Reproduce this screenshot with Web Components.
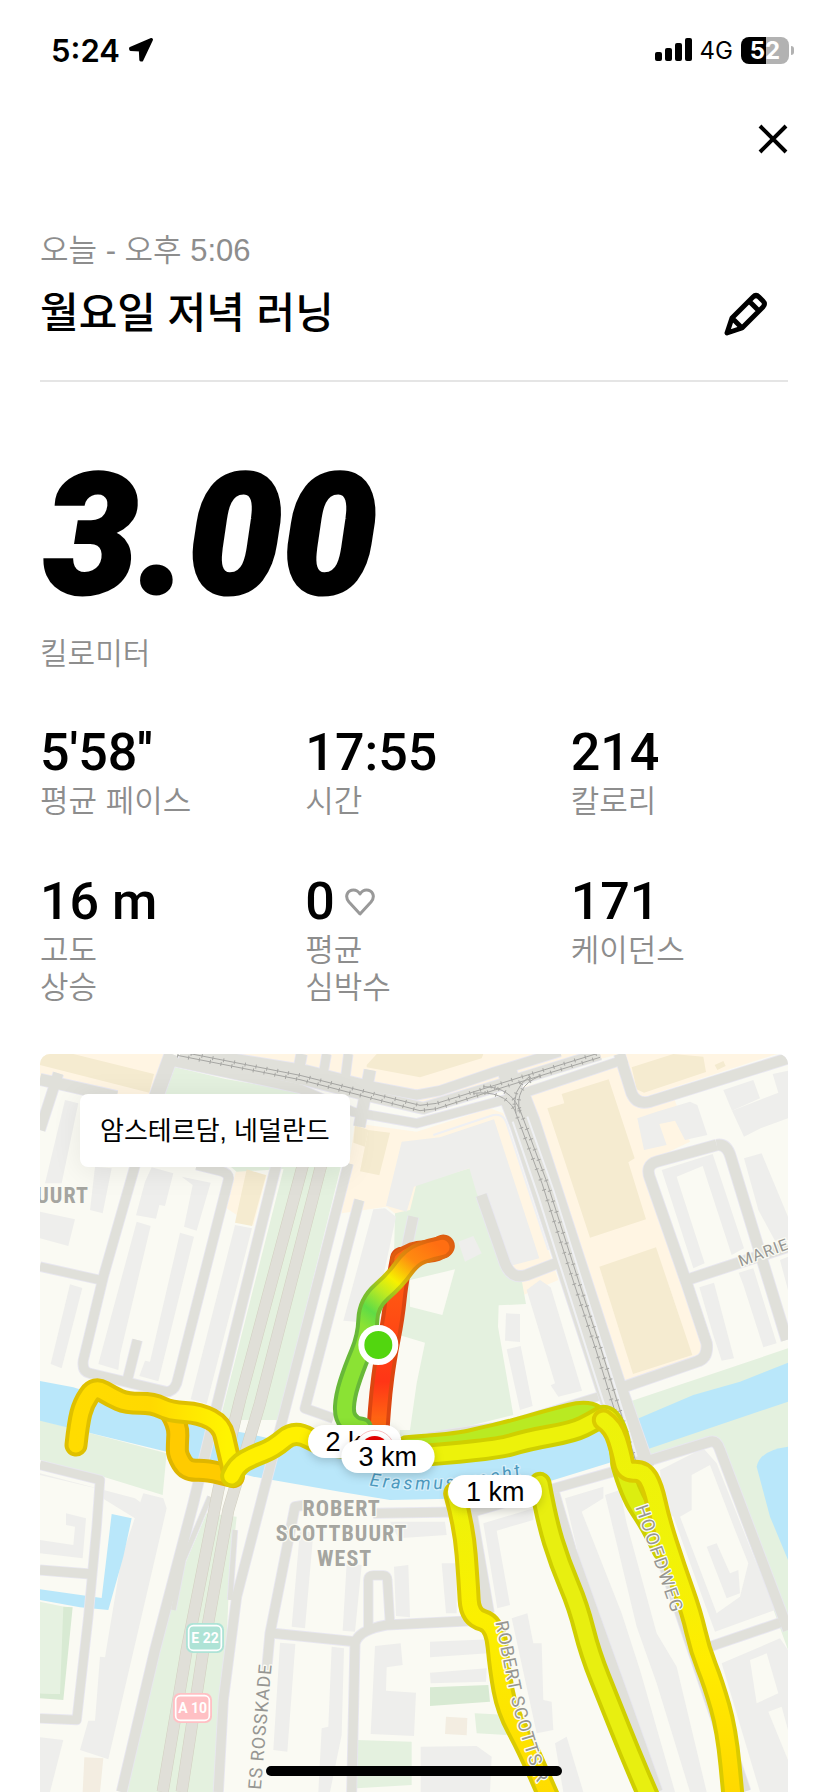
<!DOCTYPE html>
<html lang="ko">
<head>
<meta charset="utf-8">
<meta name="viewport" content="width=device-width, initial-scale=1">
<title>월요일 저녁 러닝</title>
<style>
    html, body {
        margin: 0;
        height: 100%;
        background: #fff;
        color: #000;
        font-family: "Liberation Sans", "Noto Sans CJK KR", sans-serif;
    }
</style>
</head>
<body>
<run-screen>
    <status-bar slot="status" time="5:24" network="4G" battery="52"></status-bar>
    <run-header slot="header" date="오늘 - 오후 5:06">월요일 저녁 러닝</run-header>
    <run-distance slot="distance" value="3.00">킬로미터</run-distance>
    <stat-grid slot="stats">
        <run-stat value="5'58''">평균 페이스</run-stat>
        <run-stat value="17:55">시간</run-stat>
        <run-stat value="214">칼로리</run-stat>
        <run-stat value="16 m">고도<br>상승</run-stat>
        <run-stat value="0" heart>평균<br>심박수</run-stat>
        <run-stat value="171">케이던스</run-stat>
    </stat-grid>
    <route-map slot="map">암스테르담, 네덜란드</route-map>
</run-screen>

<script>
class RunScreen extends HTMLElement {
    constructor() {
        super();
        this.attachShadow({ mode: 'open' });
    }
    connectedCallback() {
        this.shadowRoot.innerHTML = `
        <style>
            :host {
                display: flex;
                flex-direction: column;
                min-height: 100vh;
            }
            nav {
                display: flex;
                justify-content: flex-end;
                padding: 20px 36px;
            }
            button {
                display: flex;
                padding: 0;
                border: 0;
                background: none;
                color: inherit;
            }
            main {
                flex: 1;
                display: flex;
                flex-direction: column;
                padding: 0 40px;
            }
            ::slotted([slot=map]) {
                flex: 1;
            }
            .home {
                position: fixed;
                left: 50%;
                bottom: 16px;
                width: 296px;
                height: 10px;
                margin-left: -148px;
                border-radius: 5px;
                background: #000;
            }
        </style>
        <slot name="status"></slot>
        <nav>
            <button type="button" aria-label="닫기">
                <svg width="38" height="38" viewBox="0 0 38 38" fill="none" stroke="currentColor" stroke-width="4">
                    <path d="M6 6 32 32M32 6 6 32"/>
                </svg>
            </button>
        </nav>
        <main>
            <slot name="header"></slot>
            <slot name="distance"></slot>
            <slot name="stats"></slot>
            <slot name="map"></slot>
        </main>
        <div class="home"></div>
        `;
    }
}

class StatusBar extends HTMLElement {
    constructor() {
        super();
        this.attachShadow({ mode: 'open' });
    }
    connectedCallback() {
        const level = this.getAttribute('battery');
        this.shadowRoot.innerHTML = `
        <style>
            :host {
                display: flex;
                justify-content: space-between;
                align-items: center;
                height: 100px;
                padding: 0 34px 0 51px;
                font-family: Inter, sans-serif;
            }
            .side {
                display: flex;
                align-items: center;
                gap: 8px;
            }
            .time {
                font-size: 31px;
                font-weight: 600;
            }
            .network {
                font-size: 24px;
            }
            .battery {
                display: flex;
                align-items: center;
                gap: 2px;
            }
            .level {
                width: 48px;
                border-radius: 8px;
                background: linear-gradient(90deg, #000 ${level}%, #b2b2b2 ${level}%);
                color: #fff;
                font-size: 24px;
                font-weight: 700;
                line-height: 27px;
                text-align: center;
            }
            .tip {
                width: 3px;
                height: 9px;
                border-radius: 0 4px 4px 0;
                background: #b2b2b2;
            }
        </style>
        <div class="side">
            <span class="time">${this.getAttribute('time')}</span>
            <svg width="26" height="26" viewBox="0 0 26 26" stroke="#000" stroke-width="3" stroke-linejoin="round">
                <path d="M23.500 2.500 2.500 11.500 2.800 12.500 12.300 13 12.800 23 13.800 23Z"/>
            </svg>
        </div>
        <div class="side">
            <svg width="37" height="24" viewBox="0 0 37 24">
                <rect x="0" y="14" width="7" height="9" rx="2"/>
                <rect x="10" y="10" width="7" height="13" rx="2"/>
                <rect x="20" y="5" width="7" height="18" rx="2"/>
                <rect x="30" y="0" width="7" height="23" rx="2"/>
            </svg>
            <span class="network">${this.getAttribute('network')}</span>
            <span class="battery"><span class="level">${level}</span><span class="tip"></span></span>
        </div>
        `;
    }
}

class RunHeader extends HTMLElement {
    constructor() {
        super();
        this.attachShadow({ mode: 'open' });
    }
    connectedCallback() {
        this.shadowRoot.innerHTML = `
        <style>
            :host {
                display: block;
                padding: 53px 0 38px;
                border-bottom: 2px solid #e5e5e5;
            }
            .date {
                margin: 0;
                color: #8d8d8d;
                font-size: 31px;
                font-weight: 350;
                line-height: 40px;
            }
            .row {
                display: flex;
                justify-content: space-between;
                align-items: center;
                margin-top: 15px;
                padding-right: 20px;
            }
            h1 {
                margin: 0;
                font-size: 42px;
                font-weight: 500;
                line-height: 56px;
            }
            button {
                display: flex;
                padding: 0;
                border: 0;
                background: none;
                color: inherit;
            }
        </style>
        <p class="date">${this.getAttribute('date')}</p>
        <div class="row">
            <h1><slot></slot></h1>
            <button type="button" aria-label="이름 편집">
                <svg width="46" height="46" viewBox="0 0 46 46" fill="none" stroke="currentColor" stroke-width="5" stroke-linejoin="round">
                    <path d="M5 42 10 27 31 6Q34 3 37 6L41 10Q44 13 41 16L20 37ZM27 10 37 20M10 27 20 37"/>
                </svg>
            </button>
        </div>
        `;
    }
}

class RunDistance extends HTMLElement {
    constructor() {
        super();
        this.attachShadow({ mode: 'open' });
    }
    connectedCallback() {
        this.shadowRoot.innerHTML = `
        <style>
            :host {
                display: block;
                padding: 64px 0 49px;
            }
            .value {
                padding-left: 4px;
                font-family: Roboto, sans-serif;
                font-size: 168px;
                font-style: italic;
                font-weight: 900;
                line-height: 180px;
                -webkit-text-stroke: 3px #000;
            }
            .unit {
                margin-top: 8px;
                color: #8d8d8d;
                font-size: 30px;
                font-weight: 350;
                line-height: 40px;
            }
        </style>
        <div class="value">${this.getAttribute('value')}</div>
        <div class="unit"><slot></slot></div>
        `;
    }
}

class StatGrid extends HTMLElement {
    constructor() {
        super();
        this.attachShadow({ mode: 'open' });
    }
    connectedCallback() {
        this.shadowRoot.innerHTML = `
        <style>
            :host {
                display: grid;
                grid-template-columns: repeat(3, 1fr);
                gap: 52px 48px;
                padding-bottom: 48px;
            }
        </style>
        <slot></slot>
        `;
    }
}

class RunStat extends HTMLElement {
    constructor() {
        super();
        this.attachShadow({ mode: 'open' });
    }
    connectedCallback() {
        const heart = this.hasAttribute('heart') ? `
            <svg width="30" height="28" viewBox="0 0 30 28" fill="none" stroke="#999" stroke-width="3" stroke-linejoin="round">
                <path d="M15 26 4 14C-1 8 3 2 8.500 2Q12.500 2 15 6Q17.500 2 21.500 2C27 2 31 8 26 14Z"/>
            </svg>` : '';
        this.shadowRoot.innerHTML = `
        <style>
            :host {
                display: block;
            }
            .value {
                display: flex;
                align-items: center;
                gap: 10px;
                font-family: Roboto, sans-serif;
                font-size: 52px;
                font-weight: 500;
                line-height: 60px;
            }
            .label {
                color: #8d8d8d;
                font-size: 31px;
                font-weight: 350;
                line-height: 37px;
            }
        </style>
        <div class="value"><span>${this.getAttribute('value')}</span>${heart}</div>
        <div class="label"><slot></slot></div>
        `;
    }
}

// Map units are a third of a pixel at the phone's width.
const PARKS = [
    'M400 50 560 88 900 145 850 350 590 365 345 160Z',
    'M735 340 905 340 715 1110 540 1110Z',
    'M500 1390 590 1400 565 1650 540 2226 262 2226 350 1790 440 1530Z',
    'M1110 480 1130 400 1290 355 1320 440 1400 680 1445 690 1458 762 1376 766 1374 830 1420 1095 1200 1150 1080 1160 1060 700 1065 490Z',
    'M0 1110 380 1210 368 1335 190 1280 0 1230Z',
    'M1754 1060 2244 895 2244 1800 2020 1180 1800 1230Z',
    'M950 2070 1115 2075 1115 2205 950 2215Z',
    'M1304 1990 1410 1995 1400 2055 1310 2050Z'
];
const FIELDS = [
    'M70 1670 98 1672 70 1950 0 1945 0 1930 60 1932Z',
    'M1170 1912 1345 1905 1350 1955 1170 1968Z'
];
const LAWNS = ['M0 1655 80 1672 62 1932 0 1930Z'];
const YARDS = [
    'M1110 690 1245 658 1207 795 1110 770Z',
    'M1060 850 1155 878 1130 1000 1110 1140 1040 1140Z'
];
const SAND = [
    'M0 12 400 12 345 160 0 80Z',
    'M560 12 1740 12 1390 100 1150 165Z',
    'M945 220 1130 245 1350 175 1390 190 1555 690 1450 735 1430 680 1380 500 1130 410 1110 485 1070 495 1040 470 905 490Z',
    'M1450 110 1734 40 1774 160 1904 150 1950 275 1814 340 1844 460 1944 720 2004 900 1754 1005Z',
    'M1750 12 2210 12 1785 150Z',
    'M590 355 680 375 640 528 560 475Z'
];
const SHOPS = [
    'M0 12 100 12 342 72 328 128 0 45Z',
    'M985 240 1050 248 1018 376 960 364Z',
    'M945 225 985 240 975 290 940 278Z',
    'M980 45 1010 12 1330 12 1325 25 1140 82 980 52Z',
    'M620 358 678 376 636 528 585 518Z',
    'M1522 175 1573 160 1565 132 1706 88 1784 325 1765 337 1818 508 1650 563Z',
    'M1678 650 1848 592 1957 915 1779 972Z',
    'M1775 52 1900 12 1990 20 1998 66 1812 128 1790 118Z',
    'M2024 45 2050 33 2057 48 2032 60Z'
];
const SHEDS = [
    'M133 2122 190 2125 180 2226 128 2226Z',
    'M1218 2000 1282 2004 1280 2056 1215 2052Z'
];
const BUILDINGS = [
    'M75 150 115 160 65 400 15 400Z', 'M165 350 215 355 188 490 150 480Z',
    'M0 485 105 508 85 588 0 565Z', 'M335 352 400 370 375 468 358 465 348 506 288 496 315 395Z',
    'M425 380 512 398 470 542 432 530 458 405Z', 'M290 515 332 528 240 915 235 960 175 942Z',
    'M420 548 462 560 355 994 298 978 315 932 330 935Z', 'M90 703 127 714 65 955 32 942Z',
    'M585 525 636 535 500 1062 452 1048Z', 'M1000 478 1035 475 1068 500 1000 820 910 812Z',
    'M1085 275 1200 262 1362 208 1498 625 1410 648 1310 430 1288 355 1122 410 1100 485 1038 467Z',
    'M1460 720 1500 690 1532 712 1626 1022 1555 1040 1532 1006 1545 1000Z',
    'M1398 790 1440 792 1440 876 1395 872Z', 'M1400 898 1442 888 1478 1068 1440 1080Z',
    'M1255 575 1300 558 1325 610 1275 635Z',
    'M1792 205 1850 185 1950 155 1972 165 2002 255 1935 270 1905 212 1858 222 1880 285 1812 300Z',
    'M2050 120 2140 90 2160 145 2076 182Z', 'M2076 182 2215 128 2198 72 2244 62 2244 205 2162 235 2112 260Z',
    'M1865 360 2018 312 2112 595 2075 615 1988 348 1910 380 1994 640 1960 655Z',
    'M2112 325 2165 310 2244 500 2244 570 2205 572 2155 480Z',
    'M1978 712 2022 698 2082 925 2045 932 2018 850Z',
    'M2096 668 2140 655 2210 880 2170 892 2110 705Z', 'M2220 630 2244 620 2244 720Z',
    'M0 1275 190 1320 180 1340 285 1405 305 1360 285 1345 0 1270Z',
    'M310 1330 370 1345 380 1375 205 2128 120 2100 145 2012 165 2012 180 1820 195 1822 245 1520Z',
    'M78 1390 138 1405 128 1525 0 1510 0 1470 100 1485 105 1430 78 1425Z',
    'M0 2062 70 2070 30 2226 0 2226Z',
    'M780 1440 820 1450 795 1735 755 1730Z', 'M920 1540 965 1545 945 1745 908 1742Z',
    'M1062 1550 1105 1545 1110 1702 1068 1698Z', 'M1050 1415 1215 1415 1220 1455 1075 1465Z',
    'M720 1778 766 1782 742 2105 700 2100Z', 'M875 1790 912 1795 905 2055 870 2226 835 2226 845 2035 865 2030Z',
    'M1005 1788 1082 1780 1088 1845 1040 1852 1038 1922 1128 1928 1122 2058 992 2052Z',
    'M1205 1540 1250 1540 1250 1690 1218 1690Z', 'M1170 1775 1350 1768 1345 1810 1170 1822Z',
    'M1170 1868 1340 1855 1338 1895 1172 1900Z', 'M1142 2090 1310 2088 1355 2120 1350 2226 1142 2226Z',
    'M1330 1420 1480 1375 1480 1410 1370 1442 1410 1665 1372 1675Z',
    'M1415 1705 1462 1690 1480 1780 1505 1780 1510 1950 1535 1955 1540 2040 1490 2050Z',
    'M1545 2080 1580 2060 1630 2226 1570 2226Z',
    'M1575 1345 1690 1310 1690 1345 1625 1385 1745 1690 1800 1860 1905 2226 1850 2226 1740 1940 1640 1620Z',
    'M1695 1335 1740 1320 1760 1420 1850 1750 1910 1850 2000 2226 1950 2226 1850 1900 1790 1730Z',
    'M1860 1260 1990 1195 2030 1240 2205 1680 2025 1745 1990 1650 1900 1400 1870 1380Z',
    'M2045 1840 2220 1765 2244 1800 2244 2226 2160 2226Z'
];
const COURTS = [
    'M1955 1275 2010 1245 2085 1440 2125 1540 2100 1640 2030 1690 1920 1400 1955 1380Z',
    'M2130 1830 2180 1810 2215 1930 2150 1960Z', 'M2185 1985 2225 1970 2244 2040 2244 2130Z'
];
const WINGS = ['M2000 1490 2030 1480 2070 1570 2095 1560 2100 1630 2060 1645Z'];
const WATER = [
    'M0 993 100 1012 420 1115 620 1150 800 1190 1200 1205 1500 1140 1690 1110 1784 1110 1960 1035 2100 995 2244 938 2244 1055 1809 1202 1704 1240 1524 1295 1300 1345 1050 1350 900 1325 640 1280 380 1205 0 1112Z',
    'M215 1392 275 1405 250 1520 205 1680 120 1672 0 1650 0 1618 185 1644Z',
    'M2150 1250Q2160 1200 2244 1190L2244 1530 2190 1400Z'
];
// [width, path]
const ROADS = [
    [34, 'M0 88 230 140'], [30, 'M55 70 0 240'], [42, 'M395 12 345 150'],
    [28, 'M290 330 190 680 130 930Q125 965 150 970L380 1025Q400 1025 410 1000L565 390Q570 370 540 362L470 345'],
    [26, 'M0 650 180 690'], [28, 'M292 870 262 990'],
    [30, 'M710 340 530 1070 460 1360 345 1800 245 2226'],
    [28, 'M925 340 735 1080 680 1290 590 1640 550 1950 535 2226'],
    [14, 'M510 1340 430 1530 400 1680'], [14, 'M585 1440 570 1650'],
    [28, 'M958 450 795 1075 880 1105'], [30, 'M1120 500 1090 640'],
    [28, 'M500 12 800 60 1000 110 1130 135 1200 122 1364 66 1560 5'],
    [26, 'M400 35 780 116 940 186 1130 220 1390 150 1760 26'],
    [34, 'M420 12 780 85 1000 140 1150 175 1364 110 1680 12'],
    [32, 'M785 12 768 100'], [34, 'M990 60 958 230'], [26, 'M860 12 850 70'], [26, 'M925 12 915 90'],
    [56, 'M1400 60 1430 150'], [90, 'M1424 140 1455 220 1709 1000 1800 1260'],
    [32, 'M1324 435 1395 640Q1415 690 1460 675L1550 640'],
    [32, 'M1738 12 1775 130Q1790 165 1830 155L2244 25'],
    [32, 'M2030 285 1850 335Q1815 345 1830 385L1940 700 2000 880Q2005 925 1970 935L1754 1010'],
    [32, 'M2030 285Q2060 280 2072 320L2240 870'], [32, 'M1940 690 2244 590'],
    [24, 'M1674 1040 1400 1125 1164 1160'],
    [26, 'M0 1245 180 1290 170 1430 145 1700 110 2010 0 2005'], [28, 'M0 1560 150 1572'],
    [28, 'M795 1365 765 1370 690 1750 680 1860'],
    [28, 'M1000 1390 1300 1385 1560 1310 1720 1265'],
    [30, 'M1800 1240 2010 1175Q2030 1170 2040 1200L2244 1740'],
    [28, 'M700 1750 945 1775'], [28, 'M935 2226 945 1780Q955 1740 1040 1725L1340 1710'],
    [26, 'M985 1740 985 1590Q985 1576 1000 1576L1030 1576Q1042 1576 1042 1590L1050 1720'],
    [44, 'M1790 1280 2110 2226'], [36, 'M1540 1330 1590 1500 1850 2226'], [34, 'M1290 1370 1345 1690'],
    [28, 'M2010 1790 2220 1718']
];
const HIGHWAY = ['M790 340 600 1050 535 1320 440 1800 368 2226', 'M845 340 660 1060 565 1380 490 1800 425 2226'];
const KERBS = ['M1418 215 1495 440 1672 1000 1750 1240', 'M1462 200 1540 420 1716 980 1790 1220', 'M1180 255 1360 195Q1390 190 1400 220L1525 600'];
const RAILS = [
    'M420 5 780 76 1000 131 1140 166 1190 160 1364 106 1440 82 1680 8',
    'M412 16 780 89 1000 146 1140 182 1190 176 1364 120 1440 96 1680 22',
    'M1300 130Q1390 120 1424 180L1506 400 1602 700 1668 900 1770 1230',
    'M1330 110Q1410 110 1440 180L1522 400 1618 700 1684 900 1786 1230',
    'M1500 78Q1420 110 1440 190', 'M1470 78Q1410 120 1428 190'
];
// [edge, fill, points]; edge and fill are colours or gradients
const TRACKS = [
    ['#dfb600', '#ffcb00', '390 1085 415 1125 412 1185 412 1215 440 1262 500 1260 580 1280'],
    ['#dfc000', 'url(#west)', '108 1185 115 1120 130 1060 165 1010 215 1040 260 1060 340 1060 390 1085 480 1090 545 1125 560 1190 580 1275'],
    ['#dbcd00', '#fff000', '575 1278 590 1245 640 1218 700 1195 765 1140 850 1190 1000 1195'],
    ['#cfcf00', '#b9ea22', '1100 1190 1250 1180 1330 1160 1400 1145 1540 1105 1640 1080 1690 1110'],
    ['#cfcf00', '#edf20a', '1100 1220 1364 1200 1460 1170 1600 1145 1660 1115 1700 1090 1735 1150 1745 1230'],
    ['#cfcf00', '#dcee10', '1745 1240 1770 1330 1830 1420 1870 1500'],
    ['#dbcb00', 'url(#south)', '1690 1110 1720 1130 1745 1210 1755 1265 1810 1262 1838 1310 1860 1410 1905 1550 1955 1690 1980 1800 2020 1900 2060 2040 2080 2250'],
    ['#cfcf00', '#e8ef10', '1500 1300 1520 1410 1560 1540 1615 1670 1650 1810 1710 1960 1770 2110 1830 2250'],
    ['#dbcb00', 'url(#scott)', '1244 1330 1272 1430 1285 1600 1290 1700 1365 1722 1378 1860 1400 1980 1460 2090 1530 2250'],
    ['#dc4611', 'url(#back)', '1085 625 1070 700 1060 800 1035 930 1022 1030 1015 1125'],
    ['#dd5d10', '#ff6a12', '1085 630 1120 605 1180 605 1210 588'],
    ['url(#outEdge)', 'url(#out)', '1206 592 1175 598 1115 620 1065 690 985 760 982 860 940 960 915 1040 912 1100 940 1130 965 1135']
];
const fill = (list, name) => list.map(d => `<path class="${name}" d="${d}"/>`).join('');

// runs quadratic curves through the midpoints
const smooth = points => {
    const p = points.split(' ').map(Number);
    let d = `M${p[0]} ${p[1]}`;
    for (let i = 2; i < p.length - 2; i += 2) {
        d += `Q${p[i]} ${p[i + 1]} ${(p[i] + p[i + 2]) / 2} ${(p[i + 1] + p[i + 3]) / 2}`;
    }
    return d + `L${p[p.length - 2]} ${p[p.length - 1]}`;
};

class RouteMap extends HTMLElement {
    constructor() {
        super();
        this.attachShadow({ mode: 'open' });
    }
    connectedCallback() {
        const line = (list, extra, name) => list.map(([w, d]) => `<path class="${name}" stroke-width="${w + extra}" d="${d}"/>`).join('');
        const tracks = TRACKS.map(([edge, inner, points]) => `
            <path stroke="${edge}" stroke-width="69" d="${smooth(points)}"/>
            <path stroke="${inner}" stroke-width="45" d="${smooth(points)}"/>`).join('');
        this.shadowRoot.innerHTML = `
        <style>
            :host {
                position: relative;
                display: flex;
                min-height: 400px;
                border-radius: 10px 10px 0 0;
                overflow: hidden;
                background: #fafaf3;
            }
            .canvas {
                position: absolute;
                width: 100%;
                height: 100%;
            }
            .place {
                position: relative;
                align-self: flex-start;
                margin: 40px;
                padding: 2px 20px 0;
                border-radius: 8px;
                background: #fff;
                box-shadow: 0 4px 30px rgba(0,0,0,.08);
                font-size: 26px;
                line-height: 71px;
            }
            .park { fill: #e4f1df; }
            .lawn { fill: #e6f2e1; }
            .field { fill: #d8ead3; }
            .yard { fill: #fafaf3; }
            .sand { fill: #fff5e3; }
            .shop { fill: #f5ebd0; }
            .shed { fill: #f3ede1; }
            .building { fill: #eeeeec; }
            .water { fill: #b9e7fa; }
            .casing, .road, .rail, .tie, .edge, .lane, .kerb, .track {
                fill: none;
                stroke-linejoin: round;
            }
            .casing { stroke: #e8e7f0; }
            .road { stroke: #e0e0da; }
            .edge { stroke: #d2cfc0; stroke-width: 36; }
            .lane { stroke: #e0dfd8; stroke-width: 33; }
            .kerb { stroke: #eff0f3; stroke-width: 6; }
            .rail { stroke: #a6a6a3; stroke-width: 3; }
            .tie { stroke: #a6a6a3; stroke-width: 12; stroke-dasharray: 3 30; }
            .track { stroke-linecap: round; }
            text {
                paint-order: stroke;
                stroke: #fafaf3;
                stroke-width: 8px;
                stroke-linejoin: round;
                fill: #a5a5a0;
                font-family: Roboto, sans-serif;
            }
            .area { font-family: "Roboto Condensed", Roboto, sans-serif; font-size: 66px; font-weight: 700; text-anchor: middle; letter-spacing: 3px; }
            .start { text-anchor: end; }
            .street { font-size: 54px; letter-spacing: 3px; fill: #969692; }
            .side { font-size: 48px; }
            .wide { letter-spacing: 6px; }
            .canal { font-size: 54px; font-style: italic; letter-spacing: 9px; fill: #4c9abf; stroke: #d5effa; }
            .sign { font-size: 42px; font-weight: 700; text-anchor: middle; fill: #fff; stroke: none; }
            .km { font-family: "Liberation Sans", sans-serif; font-size: 81px; text-anchor: middle; fill: #000; stroke: none; }
            .pill { fill: #fff; filter: drop-shadow(0 8px 14px rgba(0,0,0,.18)); }
        </style>
        <svg class="canvas" viewBox="0 12 2244 2214" preserveAspectRatio="xMidYMin slice" role="img" aria-label="러닝 경로">
            <defs>
                <linearGradient id="west" gradientUnits="userSpaceOnUse" x1="100" y1="0" x2="560" y2="0">
                    <stop offset="0" stop-color="#ffdc00"/><stop offset=".5" stop-color="#ffd900"/><stop offset="1" stop-color="#fff400"/>
                </linearGradient>
                <linearGradient id="south" gradientUnits="userSpaceOnUse" x1="0" y1="1100" x2="0" y2="2226">
                    <stop offset="0" stop-color="#edf20a"/><stop offset=".35" stop-color="#f0f308"/><stop offset=".65" stop-color="#ffec00"/><stop offset="1" stop-color="#ffd900"/>
                </linearGradient>
                <linearGradient id="scott" gradientUnits="userSpaceOnUse" x1="0" y1="1345" x2="0" y2="2226">
                    <stop offset="0" stop-color="#edf20a"/><stop offset=".4" stop-color="#fbf000"/><stop offset="1" stop-color="#ffdc00"/>
                </linearGradient>
                <linearGradient id="back" gradientUnits="userSpaceOnUse" x1="0" y1="620" x2="0" y2="1120">
                    <stop offset="0" stop-color="#ff6410"/><stop offset=".75" stop-color="#ff3516"/><stop offset="1" stop-color="#ff6a12"/>
                </linearGradient>
                <linearGradient id="out" gradientUnits="userSpaceOnUse" x1="1200" y1="590" x2="1000" y2="850">
                    <stop offset="0" stop-color="#ff6e12"/><stop offset=".25" stop-color="#ff8a10"/><stop offset=".5" stop-color="#f7f000"/><stop offset=".65" stop-color="#bdea22"/><stop offset=".85" stop-color="#5fdc46"/><stop offset="1" stop-color="#8be234"/>
                </linearGradient>
                <linearGradient id="outEdge" gradientUnits="userSpaceOnUse" x1="1200" y1="590" x2="1000" y2="850">
                    <stop offset="0" stop-color="#e0600f"/><stop offset=".3" stop-color="#dc8c0e"/><stop offset=".5" stop-color="#cfc80a"/><stop offset=".7" stop-color="#7fc02c"/><stop offset="1" stop-color="#67b838"/>
                </linearGradient>
                <path id="canalLine" d="M988 1306Q1230 1345 1500 1262"/>
                <path id="scottLine" d="M1366 1716 1408 1925Q1440 2060 1480 2170L1520 2270"/>
            </defs>
            ${fill(SAND, 'sand')}
            ${fill(PARKS, 'park')}
            ${fill(LAWNS, 'lawn')}
            ${fill(FIELDS, 'field')}
            ${fill(YARDS, 'yard')}
            ${fill(SHOPS, 'shop')}
            ${fill(SHEDS, 'shed')}
            ${fill(BUILDINGS, 'building')}
            ${fill(COURTS, 'yard')}
            ${fill(WINGS, 'building')}
            ${fill(WATER, 'water')}
            ${line(ROADS, 5, 'casing')}
            ${line(ROADS, 0, 'road')}
            ${fill(HIGHWAY, 'edge')}
            ${fill(HIGHWAY, 'lane')}
            ${fill(KERBS, 'kerb')}
            ${fill(RAILS, 'rail')}
            ${fill(RAILS, 'tie')}
            <text class="area start" x="147" y="458">UURT</text>
            <text class="area">
                <tspan x="914" y="1398">ROBERT</tspan>
                <tspan x="914" y="1472">SCOTTBUURT</tspan>
                <tspan x="914" y="1547">WEST</tspan>
            </text>
            <text class="canal"><textPath href="#canalLine">Erasmusgracht</textPath></text>
            <g class="track">${tracks}</g>
            <text class="street side" transform="translate(2102 650) rotate(-20)">MARIE</text>
            <text class="street wide" transform="translate(1786 1372) rotate(71)">HOOFDWEG</text>
            <text class="street"><textPath href="#scottLine">ROBERT SCOTTS R</textPath></text>
            <text class="street" transform="translate(662 2220) rotate(-85)">ES ROSSKADE</text>
            <rect x="438" y="1719" width="114" height="90" rx="20" fill="#aee3d6"/>
            <rect x="446" y="1727" width="98" height="74" rx="14" fill="#aee3d6" stroke="#fff" stroke-width="5"/>
            <text class="sign" x="495" y="1779">E 22</text>
            <rect x="399" y="1929" width="117" height="90" rx="20" fill="#ffc0c4"/>
            <rect x="407" y="1937" width="101" height="74" rx="14" fill="#ffc0c4" stroke="#fff" stroke-width="5"/>
            <text class="sign" x="458" y="1989">A 10</text>
            <circle cx="1015" cy="885" r="51" fill="#52d60f" stroke="#fff" stroke-width="18"/>
            <rect class="pill" x="804" y="1125" width="280" height="99" rx="50"/>
            <text class="km" x="944" y="1204">2 km</text>
            <circle cx="1004" cy="1200" r="59" fill="#fff" stroke="#f3a0a0" stroke-width="2"/>
            <circle cx="1004" cy="1200" r="42" fill="#e60000"/>
            <rect class="pill" x="904" y="1170" width="280" height="99" rx="50"/>
            <text class="km" x="1043" y="1249">3 km</text>
            <rect class="pill" x="1224" y="1275" width="282" height="99" rx="50"/>
            <text class="km" x="1366" y="1354">1 km</text>
        </svg>
        <div class="place"><slot></slot></div>
        `;
    }
}

customElements.define('run-screen', RunScreen);
customElements.define('status-bar', StatusBar);
customElements.define('run-header', RunHeader);
customElements.define('run-distance', RunDistance);
customElements.define('stat-grid', StatGrid);
customElements.define('run-stat', RunStat);
customElements.define('route-map', RouteMap);
</script>
</body>
</html>
